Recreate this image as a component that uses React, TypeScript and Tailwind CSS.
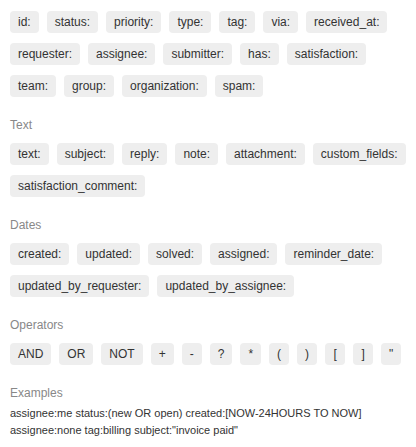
import React from "react";

const sections: { title?: string; items: string[]; op?: boolean }[] = [
  {
    items: [
      "id:", "status:", "priority:", "type:", "tag:", "via:", "received_at:",
      "requester:", "assignee:", "submitter:", "has:", "satisfaction:",
      "team:", "group:", "organization:", "spam:",
    ],
  },
  {
    title: "Text",
    items: ["text:", "subject:", "reply:", "note:", "attachment:", "custom_fields:", "satisfaction_comment:"],
  },
  {
    title: "Dates",
    items: ["created:", "updated:", "solved:", "assigned:", "reminder_date:", "updated_by_requester:", "updated_by_assignee:"],
  },
  {
    title: "Operators",
    items: ["AND", "OR", "NOT", "+", "-", "?", "*", "(", ")", "[", "]", '"'],
    op: true,
  },
];

function Chip({ label }: { label: string }) {
  return (
    <span className="inline-block rounded-[4px] bg-[#eeeeee] px-2 py-1 text-[12px] leading-[14px] text-[#333333] min-w-[20px] text-center">
      {label}
    </span>
  );
}

export default function App() {
  return (
    <div
      className="w-[416px] h-[447px] bg-white px-[10px] pt-[11px]"
      style={{ fontFamily: '"Liberation Sans", Arial, sans-serif' }}
    >
      {sections.map((s, i) => (
        <div key={i}>
          {s.title && (
            <div className="mt-[21px] mb-[11px] text-[12px] leading-[14px] text-[#888888]">{s.title}</div>
          )}
          <div className="flex flex-wrap gap-x-2 gap-y-[10px]">
            {s.items.map((it) => (
              <Chip key={it} label={it} />
            ))}
          </div>
        </div>
      ))}
      <div className="mt-[21px] mb-[5px] text-[12px] leading-[14px] text-[#888888]">Examples</div>
      <div className="text-[11px] leading-[16.5px] text-[#333333]">
        <div>assignee:me status:(new OR open) created:[NOW-24HOURS TO NOW]</div>
        <div>assignee:none tag:billing subject:"invoice paid"</div>
      </div>
    </div>
  );
}
